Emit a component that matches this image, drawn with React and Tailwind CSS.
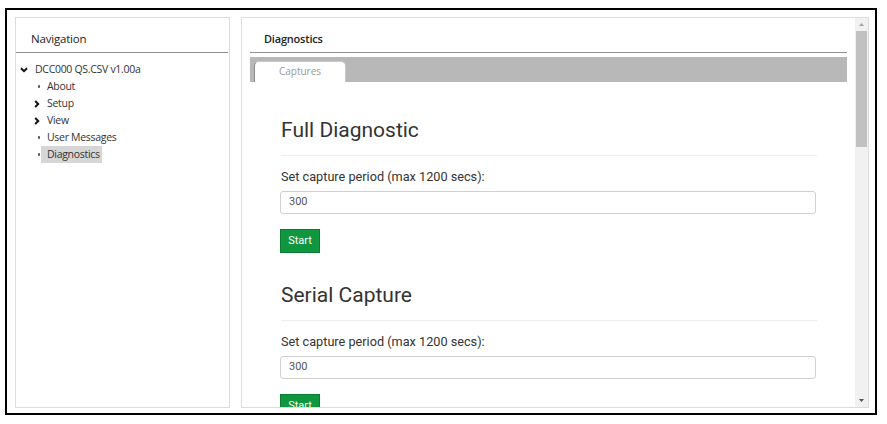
import React from "react";

const sans = { fontFamily: "'Open Sans', 'Liberation Sans', sans-serif" };
const roboto = { fontFamily: "Roboto, 'Liberation Sans', sans-serif" };

const ChevronDown = () => (
  <svg width="8" height="6" viewBox="0 0 8 6" className="mr-[7px]">
    <path d="M1 1.2 L4 4.2 L7 1.2" fill="none" stroke="#111" strokeWidth="2" />
  </svg>
);

const ChevronRight = () => (
  <svg width="6" height="8" viewBox="0 0 6 8" className="mr-[7px]">
    <path d="M1.2 1 L4.2 4 L1.2 7" fill="none" stroke="#111" strokeWidth="2" />
  </svg>
);

const Bullet = () => (
  <span className="w-[10px] mr-[3px] flex justify-center">
    <span className="w-[2.5px] h-[2.5px] bg-[#555] rounded-full" />
  </span>
);

const NavItem = ({ icon, label, active }) => (
  <div className="flex items-center h-[17px] pl-[18px]">
    {icon === "bullet" ? <Bullet /> : <ChevronRight />}
    <span
      className={
        active
          ? "bg-[#d6d6d6] pl-[6px] pr-[2px] -ml-[6px] leading-[17px]"
          : "leading-[17px]"
      }
    >
      {label}
    </span>
  </div>
);

const Section = ({ title }) => (
  <div>
    <h2 className="text-[21px] leading-[24px] text-[#333]" style={roboto}>
      {title}
    </h2>
    <div className="mt-[13px] w-[536px] border-t border-[#eeeeee]" />
    <div className="mt-[13px] text-[12.7px] leading-[16px] text-[#333]" style={roboto}>
      Set capture period (max 1200 secs):
    </div>
    <div
      className="mt-[6px] h-[23px] w-[536px] -ml-[1px] border border-[#d0d0d0] rounded-[3px] flex items-center pl-[8px] text-[11px] text-[#555]"
      style={roboto}
    >
      300
    </div>
    <button
      className="mt-[15px] -ml-[1px] h-[24px] w-[40px] bg-[#10963f] border border-[#0b7d33] text-white text-[11px] flex items-center justify-center"
      style={roboto}
    >
      Start
    </button>
  </div>
);

export default function App() {
  return (
    <div className="w-[887px] h-[424px] bg-white pt-[8px] pl-[5px]" style={sans}>
      <div className="w-[872px] h-[407px] border-2 border-black flex gap-[11px] pl-[8px] pr-[6px] pt-[7px] pb-[5px]">
        <div className="w-[215px] h-full border border-[#dcdcdc] flex flex-col">
          <div className="h-[35px] border-b border-[#8f8f8f] mr-[1px] pl-[15px] pt-[13px] text-[11.5px] leading-[16px] font-medium tracking-[-0.2px] text-[#222]">
            Navigation
          </div>
          <div className="pt-[9px] text-[10.5px] tracking-[-0.3px] text-[#333]">
            <div className="flex items-center h-[16px] pl-[4px]">
              <ChevronDown />
              <span>DCC000 QS.CSV v1.00a</span>
            </div>
            <NavItem icon="bullet" label="About" />
            <NavItem icon="chevron" label="Setup" />
            <NavItem icon="chevron" label="View" />
            <NavItem icon="bullet" label="User Messages" />
            <NavItem icon="bullet" label="Diagnostics" active />
          </div>
        </div>

        <div className="flex-1 h-full border border-[#dcdcdc] flex">
          <div className="flex-1 overflow-hidden pl-[8px] pr-[8px]">
            <div className="h-[35px] border-b border-[#8f8f8f] pl-[14px] pt-[13px] text-[11px] leading-[16px] font-semibold tracking-[-0.2px] text-[#222]">
              Diagnostics
            </div>
            <div className="mt-[4px] h-[25px] bg-[#b8b8b8] flex items-end pl-[4px]">
              <div className="w-[92px] h-[21px] bg-white rounded-t-[5px] border-t border-l border-r border-[#c8c8c8] border-l-[#8a8a8a] flex justify-center pt-[2px] text-[10px] leading-[14px] text-[#999]">
                Captures
              </div>
            </div>
            <div className="pl-[31px] pt-[36px] flex flex-col gap-[30px]">
              <Section title="Full Diagnostic" />
              <Section title="Serial Capture" />
            </div>
          </div>
          <div className="w-[13px] h-full bg-[#f1f1f1] flex flex-col items-center">
            <div className="h-[13px] flex items-center justify-center">
              <svg width="5" height="3" viewBox="0 0 5 3">
                <path d="M0 3 L2.5 0 L5 3 Z" fill="#a3a3a3" />
              </svg>
            </div>
            <div className="w-[11px] h-[116px] bg-[#c1c1c1]" />
            <div className="flex-1" />
            <div className="h-[13px] flex items-center justify-center">
              <svg width="5" height="3" viewBox="0 0 5 3">
                <path d="M0 0 L2.5 3 L5 0 Z" fill="#505050" />
              </svg>
            </div>
          </div>
        </div>
      </div>
    </div>
  );
}
